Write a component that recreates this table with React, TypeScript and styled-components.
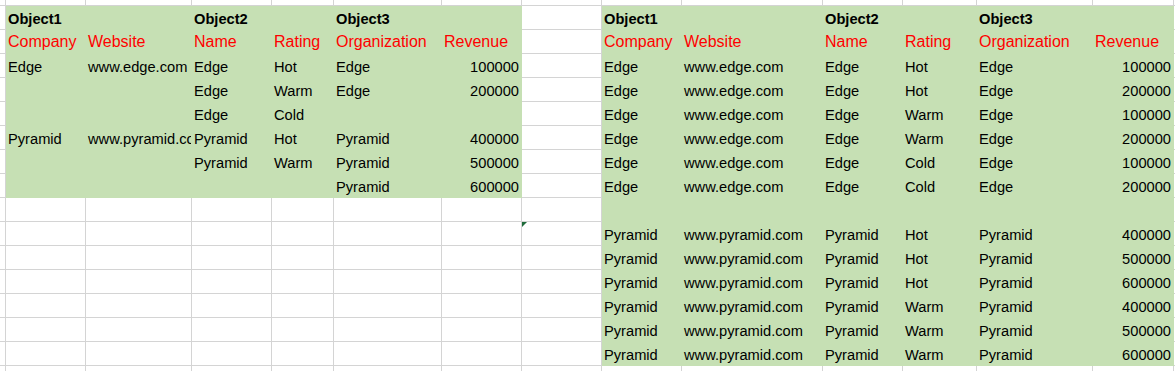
import React from "react";
import styled, { createGlobalStyle, css } from "styled-components";

const GlobalStyle = createGlobalStyle`
  html, body {
    margin: 0;
    padding: 0;
    background: #ffffff;
    overflow: hidden;
  }
  body {
    font-family: "Liberation Sans", Arial, sans-serif;
  }
`;

type Variant = "obj" | "head" | "data";

interface CellSpec {
  text: string;
  variant: Variant;
  fill: boolean;
  align: "left" | "right";
  marker?: boolean;
}

const COL_WIDTHS = [6, 80, 106, 80, 62, 108, 80, 80, 80, 141, 80, 74, 116, 81, 1];
const ROW_HEIGHTS = [6, ...Array(15).fill(24), 5];

const GREEN = "#c6e0b4";
const GRID = "#d4d4d4";

const Sheet = styled.div<{ $cols: string; $rows: string }>`
  display: grid;
  grid-template-columns: ${(p) => p.$cols};
  grid-template-rows: ${(p) => p.$rows};
  width: 1175px;
  height: 371px;
  overflow: hidden;
  background: #ffffff;
`;

const variantStyles = {
  obj: css`
    font-size: 14.667px;
    font-weight: 700;
    color: #000000;
  `,
  head: css`
    font-size: 16px;
    font-weight: 400;
    color: #ff0000;
  `,
  data: css`
    font-size: 14.667px;
    font-weight: 400;
    color: #000000;
  `,
};

const Cell = styled.div<{
  $fill: boolean;
  $variant: Variant;
  $align: "left" | "right";
  $lastRow: boolean;
}>`
  position: relative;
  box-sizing: border-box;
  min-width: 0;
  display: flex;
  align-items: flex-end;
  justify-content: ${(p) => (p.$align === "right" ? "flex-end" : "flex-start")};
  padding: 0 2px 2px 2px;
  overflow: hidden;
  white-space: nowrap;
  line-height: normal;
  background: ${(p) => (p.$fill ? GREEN : "#ffffff")};
  border-right: 1px solid ${(p) => (p.$fill ? GREEN : GRID)};
  border-bottom: ${(p) => (p.$lastRow ? "none" : `1px solid ${p.$fill ? GREEN : GRID}`)};
  ${(p) => variantStyles[p.$variant]}
`;

const ErrorMark = styled.span`
  position: absolute;
  top: 0;
  left: 0;
  width: 0;
  height: 0;
  border-top: 5px solid #1f6b3b;
  border-right: 5px solid transparent;
`;

const leftBlock: string[][] = [
  ["Object1", "", "Object2", "", "Object3", ""],
  ["Company", "Website", "Name", "Rating", "Organization", "Revenue"],
  ["Edge", "www.edge.com", "Edge", "Hot", "Edge", "100000"],
  ["", "", "Edge", "Warm", "Edge", "200000"],
  ["", "", "Edge", "Cold", "", ""],
  ["Pyramid", "www.pyramid.com", "Pyramid", "Hot", "Pyramid", "400000"],
  ["", "", "Pyramid", "Warm", "Pyramid", "500000"],
  ["", "", "", "", "Pyramid", "600000"],
];

const edgeRatings = ["Hot", "Hot", "Warm", "Warm", "Cold", "Cold"];
const edgeRevenue = ["100000", "200000", "100000", "200000", "100000", "200000"];
const pyrRatings = ["Hot", "Hot", "Hot", "Warm", "Warm", "Warm"];
const pyrRevenue = ["400000", "500000", "600000", "400000", "500000", "600000"];

const rightBlock: string[][] = [
  ["Object1", "", "Object2", "", "Object3", ""],
  ["Company", "Website", "Name", "Rating", "Organization", "Revenue"],
  ...edgeRatings.map((r, i) => ["Edge", "www.edge.com", "Edge", r, "Edge", edgeRevenue[i]]),
  ["", "", "", "", "", ""],
  ...pyrRatings.map((r, i) => ["Pyramid", "www.pyramid.com", "Pyramid", r, "Pyramid", pyrRevenue[i]]),
];

function buildGrid(): CellSpec[][] {
  const rows = ROW_HEIGHTS.length;
  const cols = COL_WIDTHS.length;
  const grid: CellSpec[][] = [];
  for (let r = 0; r < rows; r++) {
    const row: CellSpec[] = [];
    for (let c = 0; c < cols; c++) {
      row.push({ text: "", variant: "data", fill: false, align: "left" });
    }
    grid.push(row);
  }
  const place = (block: string[][], startCol: number) => {
    block.forEach((vals, i) => {
      const r = i + 1;
      vals.forEach((v, j) => {
        const variant: Variant = i === 0 ? "obj" : i === 1 ? "head" : "data";
        grid[r][startCol + j] = {
          text: v,
          variant,
          fill: true,
          align: /^\d+$/.test(v) ? "right" : "left",
        };
      });
    });
  };
  place(leftBlock, 1);
  place(rightBlock, 8);
  grid[10][7].marker = true;
  return grid;
}

const grid = buildGrid();

export default function App() {
  const cols = COL_WIDTHS.map((w) => `${w}px`).join(" ");
  const rows = ROW_HEIGHTS.map((h) => `${h}px`).join(" ");
  return (
    <>
      <GlobalStyle />
      <Sheet $cols={cols} $rows={rows}>
        {grid.map((row, r) =>
          row.map((cell, c) => (
            <Cell
              key={`${r}-${c}`}
              $fill={cell.fill}
              $variant={cell.variant}
              $align={cell.align}
              $lastRow={r === ROW_HEIGHTS.length - 1}
            >
              {cell.marker && <ErrorMark />}
              {cell.text}
            </Cell>
          ))
        )}
      </Sheet>
    </>
  );
}
